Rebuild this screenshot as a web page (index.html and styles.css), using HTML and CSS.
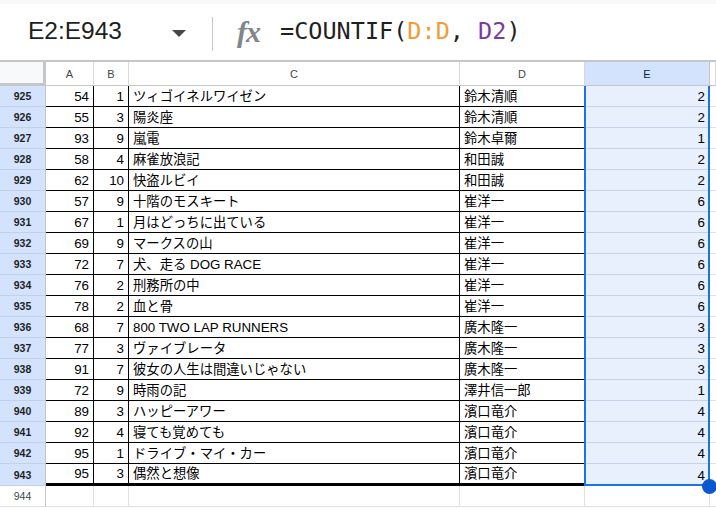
FILE: index.html
```html
<!DOCTYPE html>
<html lang="ja">
<head>
<meta charset="utf-8">
<title>Sheet</title>
<link rel="stylesheet" href="styles.css">
</head>
<body>
<div class="formula-bar">
  <div class="name-box">
    <span class="range">E2:E943</span>
    <svg class="caret" width="14" height="7" viewBox="0 0 14 7"><path d="M0 0h14L7 7z" fill="#444746"/></svg>
  </div>
  <div class="divider"></div>
  <span class="fx">fx</span>
  <div class="formula">=COUNTIF(<span class="ref1">D:D</span>, <span class="ref2">D2</span>)</div>
</div>

<div class="sheet">
  <div class="corner"></div>
  <div class="col-hd">A</div>
  <div class="col-hd">B</div>
  <div class="col-hd">C</div>
  <div class="col-hd">D</div>
  <div class="col-hd sel">E</div>
  <div class="col-hd"></div>

  <div class="row-hd">925</div><div class="c num">54</div><div class="c num">1</div><div class="c">ツィゴイネルワイゼン</div><div class="c">鈴木清順</div><div class="e">2</div><div class="f"></div>
  <div class="row-hd">926</div><div class="c num">55</div><div class="c num">3</div><div class="c">陽炎座</div><div class="c">鈴木清順</div><div class="e">2</div><div class="f"></div>
  <div class="row-hd">927</div><div class="c num">93</div><div class="c num">9</div><div class="c">嵐電</div><div class="c">鈴木卓爾</div><div class="e">1</div><div class="f"></div>
  <div class="row-hd">928</div><div class="c num">58</div><div class="c num">4</div><div class="c">麻雀放浪記</div><div class="c">和田誠</div><div class="e">2</div><div class="f"></div>
  <div class="row-hd">929</div><div class="c num">62</div><div class="c num">10</div><div class="c">快盗ルビイ</div><div class="c">和田誠</div><div class="e">2</div><div class="f"></div>
  <div class="row-hd">930</div><div class="c num">57</div><div class="c num">9</div><div class="c">十階のモスキート</div><div class="c">崔洋一</div><div class="e">6</div><div class="f"></div>
  <div class="row-hd">931</div><div class="c num">67</div><div class="c num">1</div><div class="c">月はどっちに出ている</div><div class="c">崔洋一</div><div class="e">6</div><div class="f"></div>
  <div class="row-hd">932</div><div class="c num">69</div><div class="c num">9</div><div class="c">マークスの山</div><div class="c">崔洋一</div><div class="e">6</div><div class="f"></div>
  <div class="row-hd">933</div><div class="c num">72</div><div class="c num">7</div><div class="c">犬、走る DOG RACE</div><div class="c">崔洋一</div><div class="e">6</div><div class="f"></div>
  <div class="row-hd">934</div><div class="c num">76</div><div class="c num">2</div><div class="c">刑務所の中</div><div class="c">崔洋一</div><div class="e">6</div><div class="f"></div>
  <div class="row-hd">935</div><div class="c num">78</div><div class="c num">2</div><div class="c">血と骨</div><div class="c">崔洋一</div><div class="e">6</div><div class="f"></div>
  <div class="row-hd">936</div><div class="c num">68</div><div class="c num">7</div><div class="c">800 TWO LAP RUNNERS</div><div class="c">廣木隆一</div><div class="e">3</div><div class="f"></div>
  <div class="row-hd">937</div><div class="c num">77</div><div class="c num">3</div><div class="c">ヴァイブレータ</div><div class="c">廣木隆一</div><div class="e">3</div><div class="f"></div>
  <div class="row-hd">938</div><div class="c num">91</div><div class="c num">7</div><div class="c">彼女の人生は間違いじゃない</div><div class="c">廣木隆一</div><div class="e">3</div><div class="f"></div>
  <div class="row-hd">939</div><div class="c num">72</div><div class="c num">9</div><div class="c">時雨の記</div><div class="c">澤井信一郎</div><div class="e">1</div><div class="f"></div>
  <div class="row-hd">940</div><div class="c num">89</div><div class="c num">3</div><div class="c">ハッピーアワー</div><div class="c">濱口竜介</div><div class="e">4</div><div class="f"></div>
  <div class="row-hd">941</div><div class="c num">92</div><div class="c num">4</div><div class="c">寝ても覚めても</div><div class="c">濱口竜介</div><div class="e">4</div><div class="f"></div>
  <div class="row-hd">942</div><div class="c num">95</div><div class="c num">1</div><div class="c">ドライブ・マイ・カー</div><div class="c">濱口竜介</div><div class="e">4</div><div class="f"></div>
  <div class="row-hd">943</div><div class="c num last">95</div><div class="c num last">3</div><div class="c last">偶然と想像</div><div class="c last">濱口竜介</div><div class="e">4</div><div class="f"></div>
  <div class="row-hd plain">944</div><div class="g"></div><div class="g"></div><div class="g"></div><div class="g"></div><div class="g"></div><div class="f"></div>

  <div class="selection"></div>
  <div class="fill-handle"></div>
</div>
</body>
</html>
```

FILE: styles.css
```css
html, body {
  margin: 0;
  padding: 0;
  background: #fff;
}

body {
  width: 716px;
  height: 508px;
  overflow: hidden;
  font-family: "Liberation Sans", "Noto Sans CJK JP", sans-serif;
}

/* formula bar */
.formula-bar {
  height: 56px;
  border-top: 4px solid #f8f9fa;
  display: flex;
  align-items: center;
  padding-left: 28px;
  box-sizing: content-box;
}

.name-box {
  width: 158px;
  display: flex;
  align-items: center;
  justify-content: space-between;
  margin-bottom: 2px;
}

.range {
  font-size: 24.5px;
  color: #1f1f1f;
}

.caret {
  display: block;
  margin-top: 4px;
}

.divider {
  width: 1px;
  height: 34px;
  background: #c4c7c5;
  margin-left: 26px;
  margin-top: 4px;
}

.fx {
  font-family: "Liberation Serif", serif;
  font-style: italic;
  font-weight: bold;
  font-size: 30px;
  color: #80868b;
  margin-left: 24px;
  letter-spacing: -1px;
}

.formula {
  font-family: "DejaVu Sans Mono", monospace;
  font-size: 23.5px;
  color: #1f1f1f;
  margin-left: 20px;
  margin-bottom: 2px;
}

.ref1 { color: #f29b34; }
.ref2 { color: #7c3d9a; }

/* grid */
.sheet {
  position: relative;
  display: grid;
  grid-template-columns: 46px 48px 35px 331px 125px 125px 1fr;
  grid-template-rows: 24px repeat(18, 21px) 22px 21px;
  border-top: 2px solid #c4c7c5;
  font-size: 13.33px;
  color: #000;
}

.sheet > div {
  box-sizing: border-box;
  min-width: 0;
  white-space: nowrap;
  overflow: hidden;
}

.corner {
  background: #f8f9fa;
  border-right: 3px solid #c4c7c5;
  border-bottom: 3px solid #c4c7c5;
}

.col-hd {
  display: flex;
  align-items: center;
  justify-content: center;
  font-size: 11px;
  color: #444746;
  background: #fff;
  border-right: 1px solid #d9d9d9;
  border-bottom: 1px solid #c4c7c5;
}

.col-hd.sel {
  background: #d3e3fd;
  color: #041e49;
  border-right: 1px solid #c4c7c5;
}

.row-hd {
  display: flex;
  align-items: center;
  justify-content: center;
  font-size: 10.5px;
  font-weight: bold;
  color: #1f1f1f;
  background: #d3e3fd;
  border-right: 1px solid #c4c7c5;
  border-bottom: 1px solid #c4d0e4;
}

.row-hd.plain {
  background: #fff;
  font-weight: normal;
  color: #444746;
  border-bottom: 1px solid #e1e1e1;
}

.c {
  display: flex;
  align-items: center;
  padding: 1px 4px 0;
  border-right: 1px solid #000;
  border-bottom: 1px solid #000;
  line-height: 16px;
}

.c.num {
  justify-content: flex-end;
}

.c.last {
  border-bottom: 3px solid #000;
}

.e {
  display: flex;
  align-items: center;
  justify-content: flex-end;
  padding: 1px 4px 0;
  background: #e8f0fe;
  border-right: 1px solid #c4c7c5;
  border-bottom: 1px solid #c7d3e8;
}

.f {
  border-bottom: 1px solid #e1e1e1;
}

.g {
  border-right: 1px solid #e1e1e1;
  border-bottom: 1px solid #e1e1e1;
}

/* selected range outline and drag handle */
.selection {
  position: absolute;
  left: 584px;
  top: 24px;
  width: 126px;
  height: 400px;
  box-sizing: border-box;
  border: 2px solid #1a73e8;
  border-top: none;
  pointer-events: none;
}

.fill-handle {
  position: absolute;
  left: 702px;
  top: 417px;
  width: 15px;
  height: 15px;
  border-radius: 50%;
  background: #0b57d0;
}
```
